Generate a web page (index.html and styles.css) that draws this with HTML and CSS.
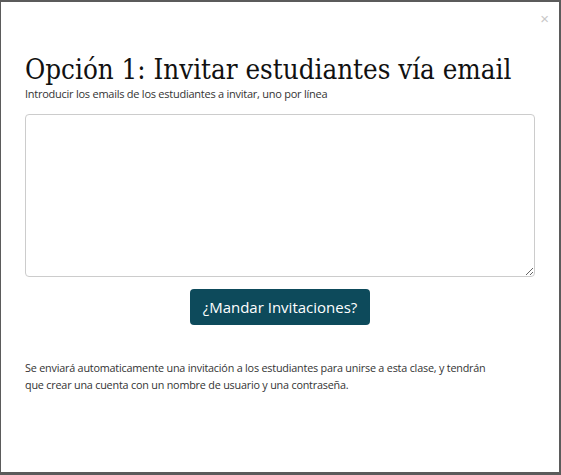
FILE: index.html
```html
<!DOCTYPE html>
<html lang="es">
<head>
<meta charset="utf-8">
<title>Invitar estudiantes</title>
<link rel="stylesheet" href="styles.css">
</head>
<body>
<div class="modal">
  <button class="close" type="button">×</button>
  <h1 class="title">Opción 1: Invitar estudiantes vía email</h1>
  <p class="hint">Introducir los emails de los estudiantes a invitar, uno por línea</p>
  <textarea class="emails"></textarea>
  <div class="actions">
    <button class="send" type="button">¿Mandar Invitaciones?</button>
  </div>
  <p class="note">Se enviará automaticamente una invitación a los estudiantes para unirse a esta clase, y tendrán que crear una cuenta con un nombre de usuario y una contraseña.</p>
</div>
</body>
</html>
```
FILE: styles.css
```css
html, body {
  margin: 0;
  padding: 0;
  height: 100%;
}
body {
  background: #5b5b5b;
  padding: 2px 2px 3px 1px;
  box-sizing: border-box;
  font-family: "Open Sans", "Liberation Sans", sans-serif;
  color: #333;
}
.modal {
  position: relative;
  background: #fff;
  height: 100%;
  box-sizing: border-box;
  padding: 50px 24px 0 24px;
}
.close {
  position: absolute;
  top: 8px;
  right: 10px;
  border: 0;
  background: none;
  font-size: 15px;
  color: #c8c8c8;
  padding: 0;
  font-family: "Liberation Sans", sans-serif;
}
.title {
  margin: 0;
  font-family: "DejaVu Serif", serif;
  font-stretch: condensed;
  font-weight: normal;
  font-size: 27.5px;
  line-height: 34px;
  color: #111;
  white-space: nowrap;
}
.hint {
  margin: 1px 0 0 0;
  font-size: 11px;
  letter-spacing: -0.25px;
  line-height: 14px;
}
.emails {
  display: block;
  margin-top: 13px;
  width: 100%;
  height: 163px;
  box-sizing: border-box;
  border: 1px solid #ccc;
  border-radius: 4px;
  resize: vertical;
}
.actions {
  display: flex;
  justify-content: center;
  margin-top: 12px;
}
.send {
  background: #0d4a5b;
  color: #fff;
  border: 0;
  border-radius: 4px;
  font-family: "Open Sans", sans-serif;
  font-size: 15px;
  padding: 0 13px;
  height: 36px;
}
.note {
  margin: 34px 0 0 0;
  max-width: 480px;
  font-size: 10.8px;
  letter-spacing: -0.2px;
  line-height: 17px;
}
```
